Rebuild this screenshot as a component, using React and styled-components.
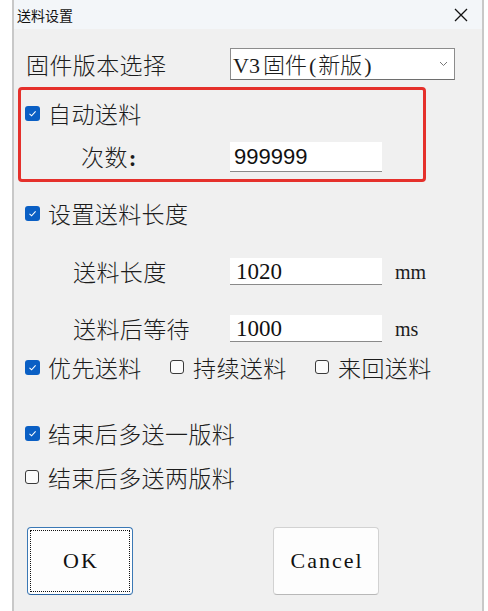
import React from 'react'
import styled, { createGlobalStyle } from 'styled-components'

const GlobalStyle = createGlobalStyle`
  html, body {
    margin: 0;
    background: #fff;
    overflow: hidden;
  }
  body {
    font-family: "Noto Sans CJK SC", "Liberation Serif", serif;
    font-weight: 300;
    color: #1c1c1c;
  }
`

const Window = styled.div`
  margin-left: 12px;
  width: 472px;
  height: 640px;
  box-sizing: border-box;
  border-left: 2px solid #c8c8c8;
  border-right: 2px solid #c8c8c8;
  background: #f0f0f0;
  display: flex;
  flex-direction: column;
`

const TitleBar = styled.div`
  height: 29px;
  flex: none;
  background: #f3f6f9;
  display: flex;
  align-items: center;
  justify-content: space-between;
  padding: 0 14px 0 3px;
  font-size: 14px;
  font-weight: 400;
  line-height: 1;
  color: #111;
`

const CloseButton = styled.span`
  display: flex;
  width: 14px;
  height: 14px;
  margin-top: 1px;
`

const Row = styled.div`
  display: flex;
  align-items: center;
  flex: none;
  margin-top: ${p => p.$mt || 0}px;
  height: ${p => p.$h || 26}px;
  padding-left: ${p => p.$pl || 0}px;
`

const Label = styled.span`
  width: ${p => p.$w}px;
  flex: none;
  font-size: 23px;
  line-height: 1;
  letter-spacing: 0.4px;
  white-space: nowrap;

  .colon {
    font-family: "Liberation Serif", serif;
    font-weight: 700;
    margin-left: 1px;
  }
`

const Select = styled.div`
  width: 225px;
  height: 32px;
  box-sizing: border-box;
  background: #fff;
  border: 1px solid #8c8c8c;
  border-bottom-color: #6e6e6e;
  display: flex;
  align-items: center;
  justify-content: space-between;
  padding: 0 6px 0 2px;
  font-size: 22px;
  line-height: 1;

  .latin {
    font-family: "Liberation Serif", serif;
    font-weight: 400;
    margin-right: 3px;
  }

  .paren {
    font-family: "Liberation Serif", serif;
    font-weight: 400;
    margin: 0 2px;
  }
`

const Input = styled.div`
  width: 152px;
  height: ${p => p.$h || 27}px;
  box-sizing: border-box;
  flex: none;
  background: #fff;
  border-bottom: 1px solid #8a8a8a;
  display: flex;
  align-items: center;
  padding-left: ${p => (p.$sans ? 4 : 6)}px;
  font-family: ${p => (p.$sans ? '"Liberation Sans", sans-serif' : '"Liberation Serif", serif')};
  font-weight: 400;
  font-size: ${p => (p.$sans ? 22 : 23)}px;
  line-height: 1;
  color: #111;
`

const Unit = styled.span`
  margin-left: 13px;
  font-family: "Liberation Serif", serif;
  font-weight: 400;
  font-size: 20px;
  line-height: 1;
`

const HighlightBox = styled.div`
  margin: 7px 0 0 4px;
  width: 408px;
  height: 95px;
  box-sizing: border-box;
  border: 3px solid #e5302b;
  border-radius: 4px;
  flex: none;
  display: flex;
  flex-direction: column;
`

const Box = styled.span`
  width: ${p => (p.$checked ? 15 : 14)}px;
  height: ${p => (p.$checked ? 15 : 14)}px;
  margin-right: ${p => (p.$checked ? 8 : 9)}px;
  box-sizing: border-box;
  flex: none;
  border-radius: 3px;
  background: ${p => (p.$checked ? '#0a5fc4' : '#fbfbfb')};
  border: ${p => (p.$checked ? 'none' : '1px solid #3a3a3a')};
  display: flex;
  align-items: center;
  justify-content: center;
`

const Check = styled.label`
  display: flex;
  align-items: center;
  width: ${p => (p.$w ? `${p.$w}px` : 'auto')};
  flex: none;
  font-size: 23px;
  line-height: 1;
  letter-spacing: 0.4px;
  white-space: nowrap;
`

const ButtonBar = styled.div`
  display: flex;
  gap: 140px;
  margin-top: 37px;
  padding-left: 13px;
`

const Button = styled.div`
  position: relative;
  width: 106px;
  height: 68px;
  box-sizing: border-box;
  border-radius: 4px;
  background: #fdfdfd;
  border: 1px solid ${p => (p.$primary ? '#3a78b5' : '#d2d2d2')};
  border-bottom-color: ${p => (p.$primary ? '#2a64a0' : '#b8b8b8')};
  display: flex;
  align-items: center;
  justify-content: center;
  padding-left: 2px;
  font-family: "Liberation Serif", serif;
  font-weight: 400;
  font-size: 22px;
  letter-spacing: 2px;
  color: #111;

  &::after {
    content: '';
    display: ${p => (p.$primary ? 'block' : 'none')};
    position: absolute;
    inset: 2px;
    border: 1px dotted #111;
  }
`

const CheckBox = ({ checked, w, children }) => (
  <Check $w={w}>
    <Box $checked={checked}>
      {checked && (
        <svg width='11' height='11' viewBox='0 0 11 11'>
          <path d='M2.5 5.8 L4.6 7.8 L8.6 3.4' fill='none' stroke='#fff' strokeWidth='1.1' />
        </svg>
      )}
    </Box>
    {children}
  </Check>
)

const App = () => {
  return <>
    <GlobalStyle />
    <Window>
      <TitleBar>
        <span>送料设置</span>
        <CloseButton>
          <svg width='14' height='14' viewBox='0 0 14 14'>
            <path d='M1 1 L13 13 M13 1 L1 13' stroke='#111' strokeWidth='1.3' />
          </svg>
        </CloseButton>
      </TitleBar>

      <Row $mt={19} $h={32} $pl={12}>
        <Label $w={204}>固件版本选择</Label>
        <Select>
          <span>
            <span className='latin'>V3</span>固件<span className='paren'>(</span>新版<span className='paren'>)</span>
          </span>
          <svg width='9' height='6' viewBox='0 0 9 6'>
            <path d='M1 1 L4.5 4.5 L8 1' fill='none' stroke='#777' strokeWidth='1' />
          </svg>
        </Select>
      </Row>

      <HighlightBox>
        <Row $mt={10} $pl={4}>
          <CheckBox checked>自动送料</CheckBox>
        </Row>
        <Row $mt={16} $h={30} $pl={60}>
          <Label $w={149}>次数<span className='colon'>:</span></Label>
          <Input $h={30} $sans>999999</Input>
        </Row>
      </HighlightBox>

      <Row $mt={18} $pl={11}>
        <CheckBox checked>设置送料长度</CheckBox>
      </Row>

      <Row $mt={32} $h={27} $pl={59}>
        <Label $w={157}>送料长度</Label>
        <Input>1020</Input>
        <Unit>mm</Unit>
      </Row>

      <Row $mt={30} $h={27} $pl={59}>
        <Label $w={157}>送料后等待</Label>
        <Input>1000</Input>
        <Unit>ms</Unit>
      </Row>

      <Row $mt={12} $pl={11}>
        <CheckBox checked w={145}>优先送料</CheckBox>
        <CheckBox w={145}>持续送料</CheckBox>
        <CheckBox>来回送料</CheckBox>
      </Row>

      <Row $mt={40} $pl={11}>
        <CheckBox checked>结束后多送一版料</CheckBox>
      </Row>

      <Row $mt={18} $pl={11}>
        <CheckBox>结束后多送两版料</CheckBox>
      </Row>

      <ButtonBar>
        <Button $primary>OK</Button>
        <Button>Cancel</Button>
      </ButtonBar>
    </Window>
  </>
}

export default App
